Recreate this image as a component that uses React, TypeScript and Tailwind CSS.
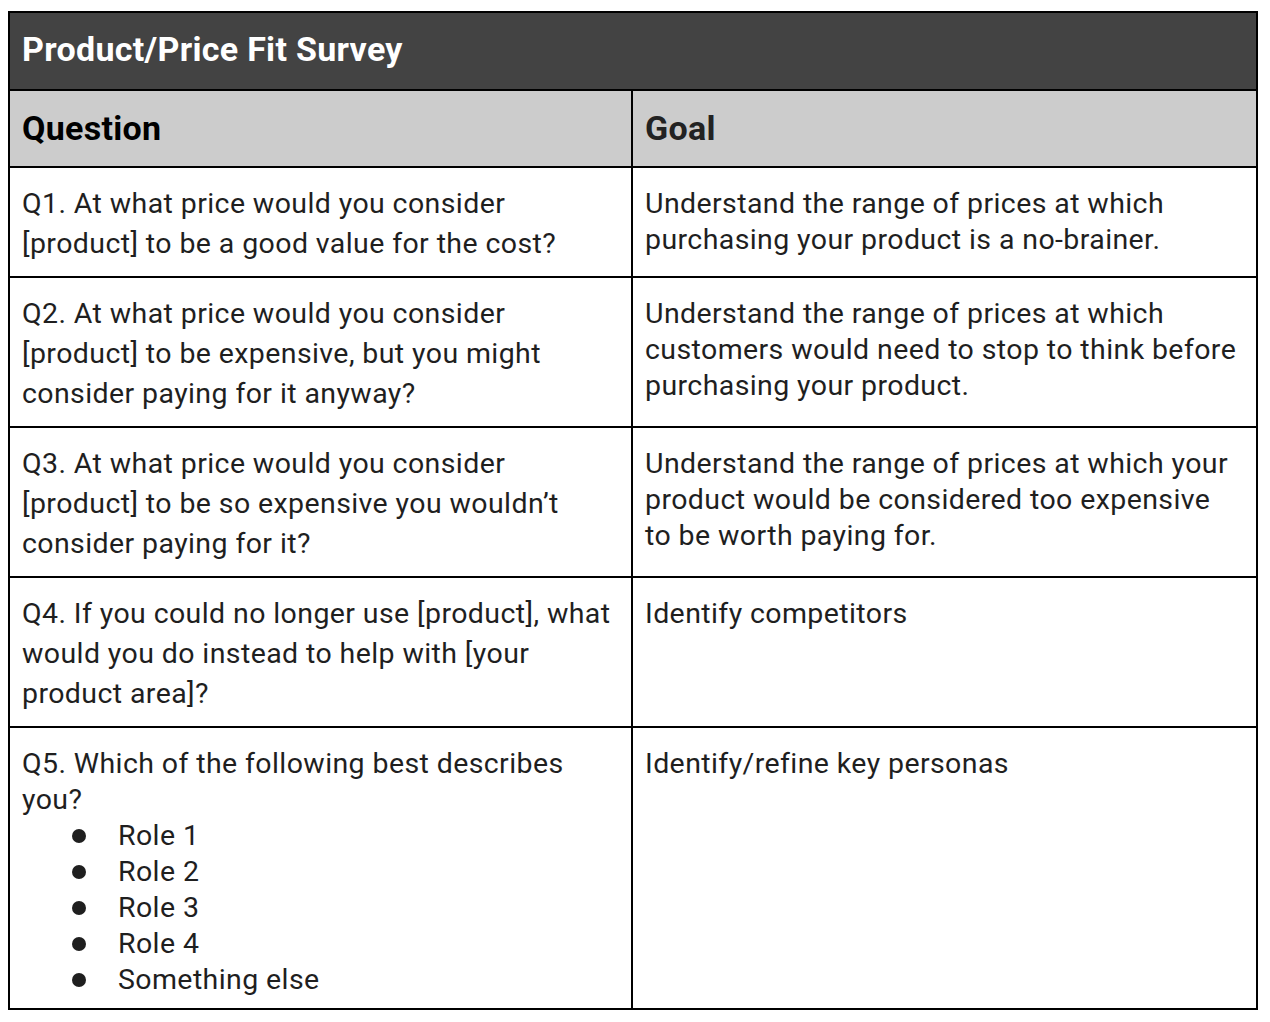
import React from 'react';

const FONT = { fontFamily: 'Roboto, "Noto Sans", Arial, sans-serif' };

type Row = {
  q: string[];
  goal: string[];
  height: string;
  qClass: string;
  roles?: string[];
};

const ROWS: Row[] = [
  {
    q: ['Q1. At what price would you consider', '[product] to be a good value for the cost?'],
    goal: ['Understand the range of prices at which', 'purchasing your product is a no-brainer.'],
    height: 'h-[110px]',
    qClass: 'pt-[16px] leading-[40px]',
  },
  {
    q: [
      'Q2. At what price would you consider',
      '[product] to be expensive, but you might',
      'consider paying for it anyway?',
    ],
    goal: [
      'Understand the range of prices at which',
      'customers would need to stop to think before',
      'purchasing your product.',
    ],
    height: 'h-[150px]',
    qClass: 'pt-[16px] leading-[40px]',
  },
  {
    q: [
      'Q3. At what price would you consider',
      '[product] to be so expensive you wouldn\u2019t',
      'consider paying for it?',
    ],
    goal: [
      'Understand the range of prices at which your',
      'product would be considered too expensive',
      'to be worth paying for.',
    ],
    height: 'h-[150px]',
    qClass: 'pt-[16px] leading-[40px]',
  },
  {
    q: [
      'Q4. If you could no longer use [product], what',
      'would you do instead to help with [your',
      'product area]?',
    ],
    goal: ['Identify competitors'],
    height: 'h-[150px]',
    qClass: 'pt-[16px] leading-[40px]',
  },
  {
    q: ['Q5. Which of the following best describes', 'you?'],
    goal: ['Identify/refine key personas'],
    height: 'h-[282px]',
    qClass: 'pt-[18px] leading-[36px]',
    roles: ['Role 1', 'Role 2', 'Role 3', 'Role 4', 'Something else'],
  },
];

export default function App() {
  return (
    <div className="min-h-[1022px] bg-white pt-[11px] pl-[8px]" style={FONT}>
      <div className="w-[1250px] border-2 border-black">
        {/* title bar */}
        <div className="h-[76px] bg-[#434343] pl-[12px] pb-[3px] flex items-center">
          <span className="text-white font-bold text-[34px] tracking-[0.3px]">
            Product/Price Fit Survey
          </span>
        </div>

        {/* header */}
        <div className="grid grid-cols-2 border-t-2 border-black bg-[#cccccc] h-[77px]">
          <div className="border-r-2 border-black pl-[12px] flex items-center">
            <span className="font-bold text-[34px] tracking-[0.3px] text-black">Question</span>
          </div>
          <div className="pl-[12px] flex items-center">
            <span className="font-bold text-[34px] tracking-[0.3px] text-[#222222]">Goal</span>
          </div>
        </div>

        {ROWS.map((row, i) => (
          <div key={i} className={`grid grid-cols-2 border-t-2 border-black ${row.height}`}>
            <div className="border-r-2 border-black pl-[12px] text-[#1f1f1f] text-[28.5px] tracking-[0.4px]">
              <div className={row.qClass}>
                {row.q.map((line) => (
                  <div key={line} className="whitespace-nowrap">
                    {line}
                  </div>
                ))}
              </div>
              {row.roles && (
                <ul className="leading-[36px]">
                  {row.roles.map((r) => (
                    <li key={r} className="flex items-center pl-[50px]">
                      <span className="w-[14px] h-[14px] rounded-full bg-[#1f1f1f] shrink-0" />
                      <span className="ml-[32px] whitespace-nowrap">{r}</span>
                    </li>
                  ))}
                </ul>
              )}
            </div>
            <div className="pl-[12px] pt-[18px] text-[#1f1f1f] text-[28.5px] tracking-[0.4px] leading-[36px]">
              {row.goal.map((line) => (
                <div key={line} className="whitespace-nowrap">
                  {line}
                </div>
              ))}
            </div>
          </div>
        ))}
      </div>
    </div>
  );
}
